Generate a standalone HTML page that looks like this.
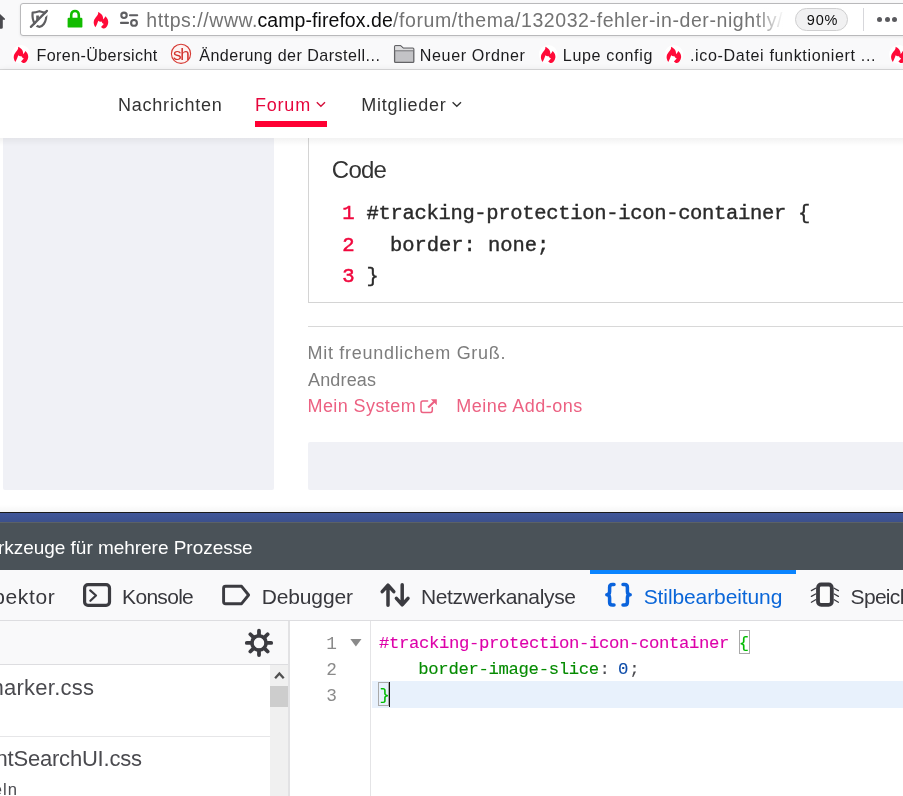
<!DOCTYPE html>
<html lang="de"><head><meta charset="utf-8"><title>camp-firefox.de Forum</title>
<style>
html,body{margin:0;padding:0}
body{width:903px;height:796px;overflow:hidden;position:relative;background:#fff;font-family:"Liberation Sans",sans-serif;}
div,span,svg,nav,header,section,aside,ul,li,a,hr{position:absolute;margin:0;padding:0;box-sizing:border-box;list-style:none}
.t{white-space:pre;line-height:0;height:0;display:block}
#chrome{left:0;top:0;width:903px;height:70px;background:#f9f9fa;border-bottom:1px solid #dadadb}
#urlbar{left:20px;top:3px;width:900px;height:33px;background:#fff;border:1px solid #b9b9bb;border-radius:3px;box-shadow:0 1px 3px rgba(0,0,0,.08)}
#urlfade{left:754px;top:8px;width:34px;height:24px;background:linear-gradient(to right,rgba(255,255,255,0),rgba(255,255,255,.9) 80%,#fff)}
#zoom{left:795px;top:8px;width:53px;height:23px;border:1px solid #cfcfd0;border-radius:12px;background:#f1f1f2}
#usep{left:863px;top:8px;width:1px;height:23px;background:#d7d7db}
.dot{width:5px;height:5px;border-radius:50%;background:#5a5a5e;top:16.5px}
#sitenav{left:0;top:70px;width:903px;height:68px;background:#fff;box-shadow:0 1px 7px rgba(0,0,0,.12)}
#underline{left:255px;top:51px;width:72px;height:6px;background:#ff0033}
#page{left:0;top:138px;width:903px;height:374px;background:#fff;overflow:hidden}
#pshadow{left:0;top:0;width:903px;height:8px;background:linear-gradient(to bottom,rgba(0,0,0,.05),rgba(0,0,0,0))}
#sidebar{left:3px;top:0;width:270.5px;height:351.5px;background:#f0f1f6;border-radius:0 0 2px 2px}
#codebox{left:308px;top:-10px;width:620px;height:174.5px;border:1px solid #d4d4d4;background:#fff}
#hr{left:308px;top:187.5px;width:600px;height:1px;background:#d8d8d8}
#graybox{left:308px;top:304px;width:600px;height:48px;background:#f0f1f6;border-radius:2px 0 0 2px}
#dt{left:0;top:512px;width:903px;height:284px;background:#fff}
#dtline{left:0;top:0;width:903px;height:1px;background:#1b1b1b}
#dtblue{left:0;top:1px;width:903px;height:10px;background:linear-gradient(#41579a,#3b4f8a)}
#dttitle{left:0;top:10px;width:903px;height:48px;background:#4a5258;border-top:1px solid #5b6167}
#dttabs{left:0;top:58px;width:903px;height:51px;background:#f9f9fa;border-bottom:1px solid #dddde0}
#tabsel{left:590px;top:0;width:206px;height:3.5px;background:#0a84ff}
#sehead{left:0;top:109px;width:289px;height:44px;background:#f9f9fa;border-bottom:1px solid #dddde0}
#selist{left:0;top:153px;width:270px;height:131px;background:#fff}
#sesep{left:0;top:224px;width:270px;height:1px;background:#e6e6e8}
#sbar{left:270px;top:153px;width:18px;height:131px;background:#f0f0f0}
#sthumb{left:0;top:21px;width:18px;height:21px;background:#cdcdcd}
#split{left:288px;top:109px;width:2px;height:175px;background:#e2e2e4}
#gutter{left:290px;top:109px;width:81px;height:175px;background:#fff;border-right:1px solid #e4e4e6}
#curline{left:371.8px;top:169.2px;width:532px;height:26.6px;background:#e8f1fc}
.bm{width:11px;height:24px;border:1px solid #a9a9a9;top:117.5px}
#cursor{left:388.9px;top:170px;width:1.2px;height:25px;background:#111}
.m{font-family:"Liberation Mono",monospace}
#texts{left:0;top:0;width:903px;height:796px;overflow:hidden;will-change:transform}

#dtshadow{left:0;top:-7px;width:903px;height:7px;background:linear-gradient(rgba(0,0,0,0),rgba(0,0,0,.04))}

</style></head>
<body>
<header id="chrome">
  <div id="urlbar"></div>
  <div id="urlfade" style="z-index:3"></div>
  <div id="zoom"></div>
  <div id="usep"></div>
  <div class="dot" style="left:877px"></div><div class="dot" style="left:884.5px"></div><div class="dot" style="left:892px"></div>
</header>
<nav id="sitenav">
  <div id="underline"></div>
</nav>
<section id="page">
  <div id="sidebar"></div>
  <div id="codebox"></div>
  <div id="pshadow"></div>
  <div id="hr"></div>
  <div id="graybox"></div>
</section>
<section id="dt">
  <div id="dtshadow"></div>
  <div id="dtblue"></div>
  <div id="dtline"></div>
  <div id="dttitle"></div>
  <div id="dttabs"><div id="tabsel"></div></div>
  <div id="sehead"></div>
  <div id="selist"><div id="sesep" style="top:71px"></div></div>
  <div id="sbar"><div id="sthumb"></div></div>
  <div id="split"></div>
  <div id="gutter"></div>
  <div id="curline"></div>
  <div class="bm" style="left:738.5px"></div>
  <div class="bm" style="left:378px;top:170px"></div>
  <div id="cursor"></div>
</section>
<svg id="icons" width="903" height="796" viewBox="0 0 903 796" style="left:0;top:0;z-index:2">
<path d="M-6 20 L0 14 L5 18.7 L5 19.8 L2.8 19.8 L2.8 27.4 Q2.8 28.8 1.4 28.8 L-4 28.8 Z" fill="#4a4a4f"/>
<path d="M39.4 11.2 C37 12 34.8 12.5 32.6 12.6 C32.2 17 32.8 21 35 24 C36.2 25.6 37.8 26.6 39.4 26.8 C41 26.6 42.6 25.6 43.8 24 C46 21 46.6 17 46.2 12.6 C44 12.5 41.8 12 39.4 11.2 Z" fill="none" stroke="#5e5e61" stroke-width="2.2" stroke-linejoin="round"/>
<path d="M36.2 15.4 L38.9 15.4 L38.9 19 L36.2 21.6 Z" fill="#5e5e61"/>
<path d="M48.6 12.2 L32.6 28.2" stroke="#fff" stroke-width="2.2"/>
<path d="M46.9 10.9 L30.9 26.9" stroke="#5e5e61" stroke-width="2.3" stroke-linecap="round"/>
<path d="M71.2 18.6 L71.2 15.2 C71.2 9.6 78.8 9.6 78.8 15.2 L78.8 18.6" fill="none" stroke="#12bc00" stroke-width="2.6"/>
<rect x="67.6" y="17.8" width="14.8" height="9.8" rx="1.2" fill="#12bc00"/>
<path transform="translate(93.4,11.6) scale(1.0)" d="M4.7 0.5 C7.6 1.6 10.2 4.4 9.7 8 C10.6 7.2 11.5 6 12 4.7 C14 6.4 15.2 9 14.8 11.4 C14.4 14.2 12.6 16.6 10.7 16.9 C9.5 17 8.4 16.3 7.6 15.4 L10.4 12.3 L8.8 11.4 C8.7 10.7 8.4 10.2 8 10 C7 10.4 5.8 10.1 4.9 9.1 C4.2 11 3.3 13.5 2 15.7 C0.6 13.6 -0.1 11.4 0.5 9.2 C1.4 6 5.6 3.6 4.7 0.5 Z" fill="#ff0a38"/>
<g fill="none" stroke="#5e5e61" stroke-width="2.1" stroke-linecap="round"><circle cx="124" cy="15.3" r="2.7"/><path d="M130 15.3 L137.2 15.3"/><path d="M121 22.9 L128 22.9"/><circle cx="134" cy="22.9" r="2.9"/></g>
<circle cx="21.0" cy="54.4" r="9.4" fill="#fff"/><path transform="translate(13.4,46.2) scale(1.0)" d="M4.7 0.5 C7.6 1.6 10.2 4.4 9.7 8 C10.6 7.2 11.5 6 12 4.7 C14 6.4 15.2 9 14.8 11.4 C14.4 14.2 12.6 16.6 10.7 16.9 C9.5 17 8.4 16.3 7.6 15.4 L10.4 12.3 L8.8 11.4 C8.7 10.7 8.4 10.2 8 10 C7 10.4 5.8 10.1 4.9 9.1 C4.2 11 3.3 13.5 2 15.7 C0.6 13.6 -0.1 11.4 0.5 9.2 C1.4 6 5.6 3.6 4.7 0.5 Z" fill="#ff0a38"/>
<circle cx="548.2" cy="54.4" r="9.4" fill="#fff"/><path transform="translate(540.6,46.2) scale(1.0)" d="M4.7 0.5 C7.6 1.6 10.2 4.4 9.7 8 C10.6 7.2 11.5 6 12 4.7 C14 6.4 15.2 9 14.8 11.4 C14.4 14.2 12.6 16.6 10.7 16.9 C9.5 17 8.4 16.3 7.6 15.4 L10.4 12.3 L8.8 11.4 C8.7 10.7 8.4 10.2 8 10 C7 10.4 5.8 10.1 4.9 9.1 C4.2 11 3.3 13.5 2 15.7 C0.6 13.6 -0.1 11.4 0.5 9.2 C1.4 6 5.6 3.6 4.7 0.5 Z" fill="#ff0a38"/>
<circle cx="673.9" cy="54.4" r="9.4" fill="#fff"/><path transform="translate(666.3,46.2) scale(1.0)" d="M4.7 0.5 C7.6 1.6 10.2 4.4 9.7 8 C10.6 7.2 11.5 6 12 4.7 C14 6.4 15.2 9 14.8 11.4 C14.4 14.2 12.6 16.6 10.7 16.9 C9.5 17 8.4 16.3 7.6 15.4 L10.4 12.3 L8.8 11.4 C8.7 10.7 8.4 10.2 8 10 C7 10.4 5.8 10.1 4.9 9.1 C4.2 11 3.3 13.5 2 15.7 C0.6 13.6 -0.1 11.4 0.5 9.2 C1.4 6 5.6 3.6 4.7 0.5 Z" fill="#ff0a38"/>
<circle cx="898.4" cy="54.4" r="9.4" fill="#fff"/><path transform="translate(890.8,46.2) scale(1.0)" d="M4.7 0.5 C7.6 1.6 10.2 4.4 9.7 8 C10.6 7.2 11.5 6 12 4.7 C14 6.4 15.2 9 14.8 11.4 C14.4 14.2 12.6 16.6 10.7 16.9 C9.5 17 8.4 16.3 7.6 15.4 L10.4 12.3 L8.8 11.4 C8.7 10.7 8.4 10.2 8 10 C7 10.4 5.8 10.1 4.9 9.1 C4.2 11 3.3 13.5 2 15.7 C0.6 13.6 -0.1 11.4 0.5 9.2 C1.4 6 5.6 3.6 4.7 0.5 Z" fill="#ff0a38"/>
<circle cx="181" cy="53.8" r="9.6" fill="#fdf3f2" stroke="#d63a34" stroke-width="1.1"/>
<text x="180.8" y="59.9" text-anchor="middle" font-family="Liberation Sans, sans-serif" font-size="17.2" letter-spacing="-1.3" fill="#d2312b">sh</text>
<path d="M395.6 45.7 L400.6 45.7 L403.4 48.2 L412.8 48.2 Q413.8 48.2 413.8 49.2 L413.8 61.4 Q413.8 62.4 412.8 62.4 L395.6 62.4 Q394.6 62.4 394.6 61.4 L394.6 46.7 Q394.6 45.7 395.6 45.7 Z" fill="#c3c3c6" stroke="#636366" stroke-width="1.3" stroke-linejoin="round"/>
<path d="M395.2 46.3 L400.4 46.3 L403.2 48.8 L413.2 48.8 L413.2 50.4 L395.2 50.4 Z" fill="#dededf"/>
<path d="M394.6 50.8 L413.8 50.8" stroke="#77777a" stroke-width="1"/>
<path d="M316.8 102.3 L320.9 106.3 L325 102.3" fill="none" stroke="#d4103a" stroke-width="1.4"/>
<path d="M452.6 102.3 L456.8 106.3 L461 102.3" fill="none" stroke="#333" stroke-width="1.4"/>
<g fill="none" stroke="#ec6182" stroke-linecap="round" stroke-linejoin="round"><path d="M432.3 407.6 L432.3 410.6 Q432.3 412.4 430.5 412.4 L422.8 412.4 Q421 412.4 421 410.6 L421 402.8 Q421 401 422.8 401 L427.6 401" stroke-width="1.5"/><path d="M428.2 407.6 L434.4 401.4" stroke-width="2.1" stroke-linecap="butt"/></g><path d="M430.8 399.2 L436.8 399.2 L436.8 405.2 Z" fill="#ec6182"/>
<rect x="84.6" y="584.7" width="24.9" height="20.6" rx="3.4" fill="none" stroke="#3b3b40" stroke-width="3.2"/><path d="M90.2 590.4 L96 595.5 L90.4 600.8" fill="none" stroke="#3b3b40" stroke-width="2.2" stroke-linecap="round" stroke-linejoin="round"/>
<path d="M225.6 586.3 L241.6 586.3 L248.6 595 L241.6 603.7 L225.6 603.7 Q223.6 603.7 223.6 601.7 L223.6 588.3 Q223.6 586.3 225.6 586.3 Z" fill="none" stroke="#3b3b40" stroke-width="2.9" stroke-linejoin="round"/>
<g fill="none" stroke="#3b3b40" stroke-width="3.5" stroke-linecap="round" stroke-linejoin="round"><path d="M388 585.4 L388 605.2 M382.2 591.6 L388 585.2 L393.8 591.6"/><path d="M402.2 584.8 L402.2 604.6 M396.4 598.4 L402.2 604.8 L408 598.4"/></g>
<g fill="none" stroke="#0a63dc" stroke-width="3.5" stroke-linecap="round" stroke-linejoin="round"><path d="M614 584.6 L612.4 584.6 Q609.6 584.6 609.6 587.4 L609.6 591.6 Q609.6 594.8 606.8 594.8 Q609.6 594.8 609.6 598 L609.6 602.2 Q609.6 605 612.4 605 L614 605"/><path d="M623 584.6 L624.6 584.6 Q627.4 584.6 627.4 587.4 L627.4 591.6 Q627.4 594.8 630.2 594.8 Q627.4 594.8 627.4 598 L627.4 602.2 Q627.4 605 624.6 605 L623 605"/></g>
<rect x="818" y="584.5" width="13.8" height="20.4" rx="3.2" fill="#fbfbfb" stroke="#3b3b40" stroke-width="3.8"/><g fill="none" stroke="#3b3b40" stroke-width="1.3" stroke-linecap="round"><path d="M811.4 590.6 L815.6 588.2 M811.4 596.4 L815.6 594 M811.4 602.2 L815.6 599.8"/><path d="M838.4 590.6 L834.2 588.2 M838.4 596.4 L834.2 594 M838.4 602.2 L834.2 599.8"/></g>
<g fill="none" stroke="#3b3b40" stroke-linecap="round"><circle cx="259" cy="642.9" r="7.1" stroke-width="3.6"/><path d="M266.40 642.90 L271.20 642.90 M264.23 648.13 L267.63 651.53 M259.00 650.30 L259.00 655.10 M253.77 648.13 L250.37 651.53 M251.60 642.90 L246.80 642.90 M253.77 637.67 L250.37 634.27 M259.00 635.50 L259.00 630.70 M264.23 637.67 L267.63 634.27 " stroke-width="3.8"/></g>
<path d="M275.1 678.3 L279.4 673.4 L283.7 678.3" fill="none" stroke="#505050" stroke-width="2.3"/>
<path d="M350.3 639.1 L361.5 639.1 L355.9 646.5 Z" fill="#8a8a8a"/>
</svg>

<div id="texts">
<span class="t" style="left:146.30px;top:20.04px;font-size:19.5px;color:#737373;letter-spacing:0.555px;">https://www.</span>
<span class="t" style="left:257.50px;top:20.04px;font-size:19.5px;color:#0c0c0d;letter-spacing:0.068px;">camp-firefox.de</span>
<span class="t" style="left:393.00px;top:20.04px;font-size:19.5px;color:#737373;letter-spacing:0.589px;">/forum/thema/132032-fehler-in-der-nightly/</span>
<span class="t" style="left:806.80px;top:20.38px;font-size:14.5px;color:#0c0c0d;letter-spacing:0.836px;">90%</span>
<span class="t" style="left:36.50px;top:55.02px;font-size:16.1px;color:#1c1c1e;letter-spacing:0.385px;">Foren-Übersicht</span>
<span class="t" style="left:199.20px;top:55.02px;font-size:16.1px;color:#1c1c1e;letter-spacing:0.465px;">Änderung der Darstell...</span>
<span class="t" style="left:419.80px;top:55.02px;font-size:16.1px;color:#1c1c1e;letter-spacing:0.615px;">Neuer Ordner</span>
<span class="t" style="left:562.80px;top:55.02px;font-size:16.1px;color:#1c1c1e;letter-spacing:0.633px;">Lupe config</span>
<span class="t" style="left:690.00px;top:55.02px;font-size:16.1px;color:#1c1c1e;letter-spacing:0.631px;">.ico-Datei funktioniert ...</span>
<span class="t" style="left:118.00px;top:104.56px;font-size:18px;color:#333333;letter-spacing:0.776px;">Nachrichten</span>
<span class="t" style="left:254.90px;top:104.56px;font-size:18px;color:#e6063c;letter-spacing:0.822px;">Forum</span>
<span class="t" style="left:361.30px;top:104.56px;font-size:18px;color:#333333;letter-spacing:0.718px;">Mitglieder</span>
<span class="t" style="left:331.80px;top:169.68px;font-size:24px;color:#333333;letter-spacing:-0.742px;">Code</span>
<span class="t m" style="left:342.30px;top:213.81px;font-size:20.6px;color:#f0083e;-webkit-text-stroke:0.5px #f0083e;">1</span>
<span class="t m" style="left:342.30px;top:245.51px;font-size:20.6px;color:#f0083e;-webkit-text-stroke:0.5px #f0083e;">2</span>
<span class="t m" style="left:342.30px;top:277.21px;font-size:20.6px;color:#f0083e;-webkit-text-stroke:0.5px #f0083e;">3</span>
<span class="t m" style="left:366.50px;top:213.83px;font-size:20.5px;color:#2a2a2a;letter-spacing:-0.316px;-webkit-text-stroke:0.4px #2a2a2a;">#tracking-protection-icon-container {</span>
<span class="t m" style="left:390.00px;top:245.53px;font-size:20.5px;color:#2a2a2a;letter-spacing:-0.052px;-webkit-text-stroke:0.4px #2a2a2a;">border: none;</span>
<span class="t m" style="left:366.60px;top:277.23px;font-size:20.5px;color:#2a2a2a;-webkit-text-stroke:0.4px #2a2a2a;">}</span>
<span class="t" style="left:307.50px;top:353.06px;font-size:18px;color:#7d7d7d;letter-spacing:0.712px;">Mit freundlichem Gruß.</span>
<span class="t" style="left:308.00px;top:379.76px;font-size:18px;color:#7d7d7d;letter-spacing:0.160px;">Andreas</span>
<span class="t" style="left:307.50px;top:406.26px;font-size:18px;color:#ec6182;letter-spacing:0.417px;">Mein System</span>
<span class="t" style="left:456.20px;top:406.26px;font-size:18px;color:#ec6182;letter-spacing:0.494px;">Meine Add-ons</span>
<span class="t" style="left:-2.00px;top:548.22px;font-size:19px;color:#ffffff;letter-spacing:-0.033px;">rkzeuge für mehrere Prozesse</span>
<span class="t" style="left:-6.80px;top:596.52px;font-size:21px;color:#38383d;letter-spacing:0.646px;">pektor</span>
<span class="t" style="left:122.10px;top:596.52px;font-size:21px;color:#38383d;letter-spacing:-0.702px;">Konsole</span>
<span class="t" style="left:261.70px;top:596.52px;font-size:21px;color:#38383d;letter-spacing:-0.134px;">Debugger</span>
<span class="t" style="left:420.90px;top:596.52px;font-size:21px;color:#38383d;letter-spacing:-0.344px;">Netzwerkanalyse</span>
<span class="t" style="left:643.70px;top:596.52px;font-size:21px;color:#0a66d8;letter-spacing:-0.101px;">Stilbearbeitung</span>
<span class="t" style="left:850.60px;top:596.52px;font-size:21px;color:#38383d;letter-spacing:-0.698px;">Speicher</span>
<span class="t" style="left:-14.50px;top:688.08px;font-size:22px;color:#4a4a4f;letter-spacing:0.239px;">marker.css</span>
<span class="t" style="left:-4.50px;top:759.48px;font-size:22px;color:#4a4a4f;letter-spacing:-0.205px;">ntSearchUI.css</span>
<span class="t" style="left:-7.30px;top:790.05px;font-size:16.6px;color:#4a4a4f;letter-spacing:1.042px;">eln</span>
<span class="t m" style="left:326.30px;top:643.55px;font-size:17.8px;color:#8a8a8a;">1</span>
<span class="t m" style="left:326.30px;top:669.85px;font-size:17.8px;color:#8a8a8a;">2</span>
<span class="t m" style="left:326.30px;top:696.25px;font-size:17.8px;color:#8a8a8a;">3</span>
<span class="t m" style="left:379.00px;top:643.69px;font-size:17.3px;color:#dd00a9;letter-spacing:-0.370px;-webkit-text-stroke:0.12px #dd00a9;">#tracking-protection-icon-container</span>
<span class="t m" style="left:738.70px;top:643.69px;font-size:17.3px;color:#00bb00;-webkit-text-stroke:0.12px #00bb00;">{</span>
<span class="t m" style="left:418.30px;top:669.99px;font-size:17.3px;color:#058b00;letter-spacing:-0.341px;-webkit-text-stroke:0.12px #058b00;">border-image-slice</span>
<span class="t m" style="left:599.50px;top:669.99px;font-size:17.3px;color:#4a4a4f;-webkit-text-stroke:0.12px #4a4a4f;">:</span>
<span class="t m" style="left:618.00px;top:669.99px;font-size:17.3px;color:#0b4aa8;-webkit-text-stroke:0.12px #0b4aa8;">0</span>
<span class="t m" style="left:629.20px;top:669.99px;font-size:17.3px;color:#4a4a4f;-webkit-text-stroke:0.12px #4a4a4f;">;</span>
<span class="t m" style="left:379.50px;top:696.39px;font-size:17.3px;color:#00bb00;-webkit-text-stroke:0.12px #00bb00;">}</span>
</div>
</body></html>
